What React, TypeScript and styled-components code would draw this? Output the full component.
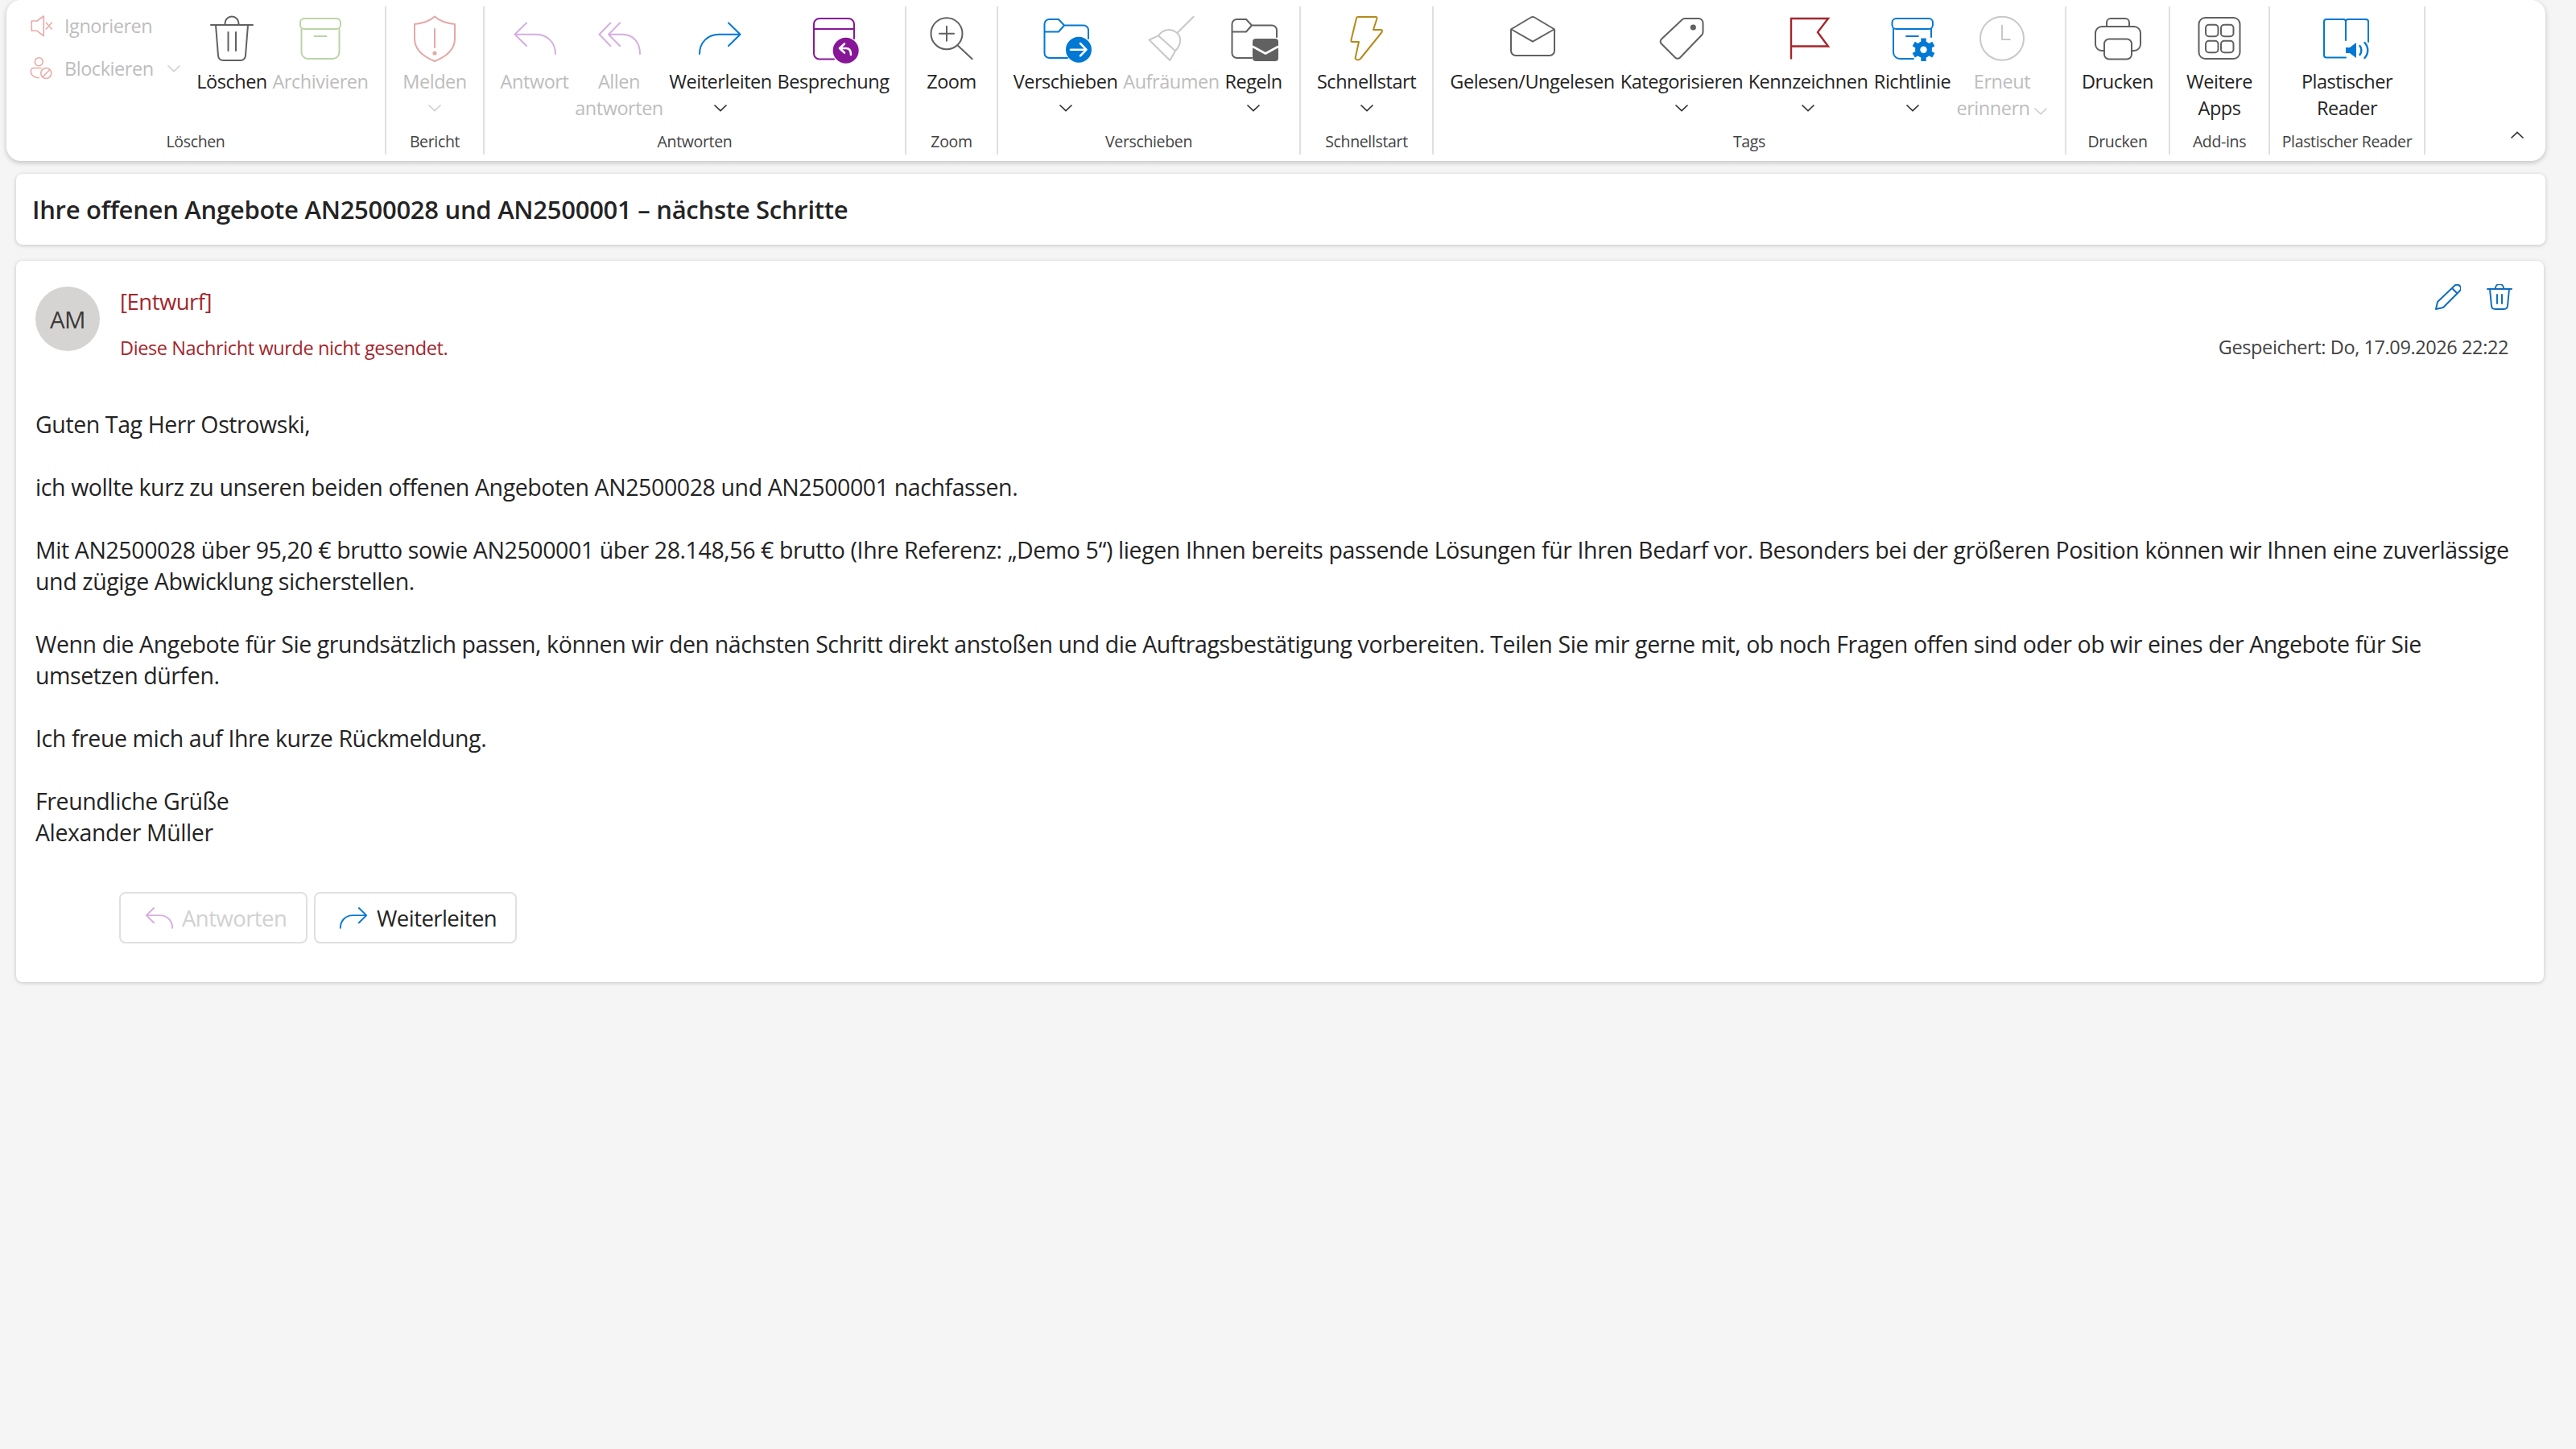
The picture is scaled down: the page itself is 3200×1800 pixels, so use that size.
import React from 'react';
import styled, { createGlobalStyle } from 'styled-components';

const GlobalStyle = createGlobalStyle`
    html, body {
        margin: 0;
        background: #f5f5f5;
    }
    body {
        font-family: "Open Sans", "Liberation Sans", sans-serif;
        color: #242424;
    }
`;

const Page = styled.div`
    min-height: 100vh;
    display: flex;
    flex-direction: column;
`;

const Ribbon = styled.div`
    display: flex;
    align-items: flex-start;
    height: 200px;
    box-sizing: border-box;
    margin: 0 38px 16px 8px;
    padding-top: 8px;
    background: #fff;
    border-radius: 18px;
    box-shadow: 0 2px 6px rgba(0, 0, 0, 0.22);
`;

const Group = styled.div<{ $w: number }>`
    width: ${p => p.$w}px;
    height: 184px;
    box-sizing: border-box;
    border-right: 2px solid #e0e0e0;
    display: flex;
    flex-direction: column;
    flex: none;
`;

const GroupItems = styled.div<{ $pad?: number }>`
    height: 150px;
    display: flex;
    align-items: flex-start;
    justify-content: ${p => (p.$pad === undefined ? 'center' : 'flex-start')};
    padding-left: ${p => p.$pad ?? 0}px;
`;

const GroupLabel = styled.div`
    height: 34px;
    line-height: 35px;
    text-align: center;
    font-size: 19.5px;
    letter-spacing: -0.35px;
    color: #424242;
    white-space: nowrap;
`;

const Tool = styled.div<{ $w: number; $off?: boolean }>`
    width: ${p => p.$w}px;
    flex: none;
    padding-top: 8px;
    display: flex;
    flex-direction: column;
    align-items: center;
    font-size: 23.5px;
    line-height: 33px;
    letter-spacing: -0.46px;
    color: ${p => (p.$off ? '#bdbdbd' : '#242424')};
    white-space: nowrap;
`;

const ToolText = styled.div`
    margin-top: 5px;
    text-align: center;
`;

const ChevronRow = styled.div`
    height: 32px;
    display: flex;
    align-items: center;
    justify-content: center;
`;

const ChevronInline = styled.span`
    display: inline-block;
    margin-left: 4px;
`;

const SmallStack = styled.div`
    width: 219px;
    flex: none;
    padding: 8px 0 0 14px;
    box-sizing: border-box;
    display: flex;
    flex-direction: column;
    gap: 21px;
`;

const SmallRow = styled.div`
    display: flex;
    align-items: center;
    gap: 12px;
    height: 32px;
    font-size: 23.5px;
    letter-spacing: -0.46px;
    color: #bdbdbd;
    white-space: nowrap;
`;

const Glyph = styled.svg<{ $sw?: number; $fg: string }>`
    flex: none;
    display: block;
    fill: none;
    color: ${p => p.$fg};
    stroke: currentColor;
    stroke-width: ${p => p.$sw ?? 2};
    stroke-linecap: round;
    stroke-linejoin: round;
`;

const ChevronSvg = styled.svg<{ $off?: boolean }>`
    flex: none;
    display: block;
    fill: none;
    stroke: ${p => (p.$off ? '#d0d0d0' : '#323130')};
    stroke-width: 1.7;
`;

const CollapseButton = styled.div`
    margin: auto 26px 27px auto;
    display: flex;
`;

const SubjectCard = styled.div`
    margin: 0 38px 20px 20px;
    height: 88px;
    padding-left: 20px;
    display: flex;
    align-items: center;
    background: #fff;
    border-radius: 8px;
    box-shadow: 0 1px 5px rgba(0, 0, 0, 0.2);
    font-size: 31px;
    font-weight: 600;
    letter-spacing: -0.28px;
    color: #242424;
`;

const MessageCard = styled.div`
    margin: 0 40px 0 20px;
    padding: 32px 44px 48px 24px;
    background: #fff;
    border-radius: 8px;
    box-shadow: 0 1px 5px rgba(0, 0, 0, 0.2);
`;

const MessageHead = styled.div`
    display: flex;
    align-items: flex-start;
    height: 152px;
`;

const Avatar = styled.div`
    width: 80px;
    height: 80px;
    flex: none;
    border-radius: 50%;
    background: #d6d4d2;
    color: #3b3a39;
    font-size: 29.5px;
    letter-spacing: -0.5px;
    display: flex;
    align-items: center;
    justify-content: center;
`;

const HeadInfo = styled.div`
    margin-left: 25px;
    flex: 1;
    color: #a4262c;
`;

const DraftName = styled.div`
    height: 38px;
    line-height: 38px;
    font-size: 27.5px;
    letter-spacing: -0.5px;
`;

const DraftNote = styled.div`
    margin-top: 19px;
    line-height: 38px;
    font-size: 23.5px;
    letter-spacing: -0.4px;
`;

const HeadMeta = styled.div`
    display: flex;
    flex-direction: column;
    align-items: flex-end;
`;

const HeadActions = styled.div`
    display: flex;
    gap: 32px;
    margin-right: -5px;
    margin-top: -3px;
`;

const SavedAt = styled.div`
    margin-top: 27px;
    line-height: 38px;
    font-size: 23.5px;
    letter-spacing: -0.4px;
    color: #424242;
    white-space: nowrap;
`;

const MailBody = styled.div`
    font-size: 28.5px;
    line-height: 39px;
    letter-spacing: -0.4px;
    color: #242424;
    white-space: nowrap;
`;

const MailPara = styled.p`
    margin: 0 0 39px;
`;

const ReplyBar = styled.div`
    display: flex;
    gap: 8px;
    margin: 54px 0 0 104px;
`;

const ReplyButton = styled.div<{ $w: number; $off?: boolean }>`
    width: ${p => p.$w}px;
    height: 64px;
    box-sizing: border-box;
    border: 2px solid #e0e0e0;
    border-radius: 8px;
    padding-left: 27px;
    display: flex;
    align-items: center;
    gap: 8px;
    font-size: 27.5px;
    letter-spacing: -0.55px;
    color: ${p => (p.$off ? '#d1d1d1' : '#242424')};
`;

const Chevron = ({ off }: { off?: boolean }) => (
    <ChevronSvg $off={off} width="18" height="10" viewBox="0 0 18 10">
        <polyline points="1.5,1.5 9,8.5 16.5,1.5" />
    </ChevronSvg>
);

const ChevronUp = () => (
    <ChevronSvg width="18" height="10" viewBox="0 0 18 10">
        <polyline points="1.5,8.5 9,1.5 16.5,8.5" />
    </ChevronSvg>
);

const ICONS: Record<string, React.ReactNode> = {
    trash: (
        <>
            <path d="M6 15H58M23.5 15V13a8.5 8.5 0 0 1 17 0v2" />
            <path d="M12 15L15 53q.5 6 6.5 6h21q6 0 6.5-6L52 15" />
            <path d="M27.5 24V47M37 24V47" />
        </>
    ),
    archive: (
        <>
            <rect x="7" y="7" width="50" height="13" rx="5" />
            <path d="M8.5 20V49a8 8 0 0 0 8 8h31a8 8 0 0 0 8-8V20M24.5 29H39.5" />
        </>
    ),
    shield: (
        <>
            <path d="M32 4.5C38 10 47 13 57 14V32C57 46 47 54 32 60C17 54 7 46 7 32V14C17 13 26 10 32 4.5Z" />
            <path d="M32 20V43" />
            <circle cx="32" cy="50" r="1.6" fill="currentColor" />
        </>
    ),
    reply: <path d="M22 12.5L7.5 26.7L22 41M7.5 26.7H34C48 26.7 58 37 58 51" />,
    replyAll: <path d="M21.3 12.5L7.5 26.7L21.3 41M33 12.5L19 26.7L33 41M19 26.7H36C50 26.7 58 37 58 51" />,
    forward: <path d="M42 12.5L56.5 26.7L42 41M56.5 26.7H30C16 26.7 6 37 6 51" />,
    meeting: (
        <>
            <path d="M33 57.5H15a7 7 0 0 1-7-7V14a7 7 0 0 1 7-7H51a7 7 0 0 1 7 7V32M8 20H58" />
            <circle cx="47.7" cy="46.7" r="15" fill="currentColor" />
            <path d="M46 38.5L40 44L46 49.5M40 44H48C52 44 54 47 54 52" stroke="#fff" strokeWidth="2.6" />
        </>
    ),
    zoom: (
        <>
            <circle cx="26" cy="25.7" r="19.5" />
            <path d="M40 40.7L57.7 57.3M26 16.7V34.7M17 25.7H35" />
        </>
    ),
    folderMove: (
        <>
            <path d="M5.5 23.5V14a6 6 0 0 1 6-6H23L30 15.5L23 23.5H5.5V50a6 6 0 0 0 6 6H34M30 15.5H54a6 6 0 0 1 6 6V32" />
            <circle cx="48" cy="45.7" r="15" fill="currentColor" />
            <path d="M38 45.7H57M50 38L57.5 45.7L50 53.4" stroke="#fff" strokeWidth="2.6" />
        </>
    ),
    broom: (
        <>
            <path d="M59.7 4.7L40.3 24" />
            <path d="M4.5 33.5L16 28.3C20 22 30 18 38 24C46 30 44 40 37 47.3L30.3 59Z" />
            <path d="M16 28.3L37 47.3" />
        </>
    ),
    folderRules: (
        <>
            <path d="M5.5 23.5V14a6 6 0 0 1 6-6H23L30 15.5L23 23.5H5.5V50a6 6 0 0 0 6 6H30M30 15.5H55a6 6 0 0 1 6 6V30" />
            <rect x="31" y="32" width="32" height="28" rx="4" fill="currentColor" stroke="none" />
            <path d="M31.5 42L47 50.5L62.5 42" stroke="#fff" strokeWidth="2.6" />
        </>
    ),
    bolt: <path d="M21 5H43Q45 5 44.5 7L40 21H49Q52 21 50.5 24L24 57Q20 60 17.5 56.5L22 36H14Q12 36 12.5 33.5L19 6.5Q19.5 5 21 5Z" />,
    mailOpen: (
        <path d="M5 23a3 3 0 0 1 1.5-3.5L30 5.5a4 4 0 0 1 4 0L57.5 19.5a3 3 0 0 1 1.5 3.5V47a6 6 0 0 1-6 6H11a6 6 0 0 1-6-6ZM5.5 20.5L32 35.7L58.5 20.5" />
    ),
    tag: (
        <>
            <path d="M36 7H53a5.5 5.5 0 0 1 5.5 5.5V24a5 5 0 0 1-1.5 3.5L30 55.5a4 4 0 0 1-6 0L7 38.5a4 4 0 0 1 0-6L32.5 8.5a5 5 0 0 1 3.5-1.5Z" />
            <circle cx="46.3" cy="18" r="3.6" fill="currentColor" stroke="none" />
        </>
    ),
    flag: <path d="M11 57.5V7H57L44 24L57 41.5H11" strokeLinecap="butt" strokeLinejoin="miter" strokeWidth="2.4" />,
    policy: (
        <>
            <rect x="6.5" y="7" width="50.5" height="13" rx="5" />
            <path d="M8 20V49a8 8 0 0 0 8 8H33M55 20V30M24 29H38.8" />
            <g stroke="currentColor" strokeWidth="6.4" strokeLinecap="butt">
                <path d="M45.5 31.5V60M33.2 38.6L57.8 52.8M33.2 52.8L57.8 38.6" />
            </g>
            <circle cx="45.5" cy="45.7" r="10.5" fill="currentColor" stroke="none" />
            <circle cx="45.5" cy="45.7" r="4.2" fill="#fff" stroke="none" />
        </>
    ),
    clock: (
        <>
            <circle cx="32" cy="31.7" r="27" />
            <path d="M32 15.7V33H41.7" />
        </>
    ),
    printer: (
        <>
            <path d="M18 17V12a5 5 0 0 1 5-5H41a5 5 0 0 1 5 5V17" />
            <path d="M15 47H12a8 8 0 0 1-8-8V25a8 8 0 0 1 8-8H52a8 8 0 0 1 8 8V39a8 8 0 0 1-8 8H49" />
            <rect x="15" y="32.5" width="34" height="25" rx="6" />
        </>
    ),
    apps: (
        <>
            <rect x="6.5" y="6" width="51" height="51" rx="8" />
            <rect x="15" y="14.7" width="15.5" height="14.5" rx="4" />
            <rect x="34" y="14.7" width="15.5" height="14.5" rx="4" />
            <rect x="15" y="34.7" width="15.5" height="14.5" rx="4" />
            <rect x="34" y="34.7" width="15.5" height="14.5" rx="4" />
        </>
    ),
    reader: (
        <>
            <path d="M30 55.5H6a3 3 0 0 1-3-3V11a3 3 0 0 1 3-3H27a3 3 0 0 1 3 3V34M30 11a3 3 0 0 1 3-3H55a3 3 0 0 1 3 3V36" />
            <path d="M30 43H35L43 37V56L35 50H30Z" fill="currentColor" stroke="none" />
            <path d="M47.5 41C50 44 50 49 47.5 52M53.5 37C58.5 42.5 58.5 50.5 53.5 56" strokeWidth="2.4" />
        </>
    ),
};

const Icon = ({ name, color, size = 64, sw }: { name: string; color: string; size?: number; sw?: number }) => (
    <Glyph $fg={color} $sw={sw} width={size} height={size} viewBox="0 0 64 64">
        {ICONS[name]}
    </Glyph>
);

const BLUE = '#0078d4';
const GREY = '#616161';

interface ToolProps {
    w: number;
    icon: string;
    color: string;
    lines: string[];
    off?: boolean;
    chevron?: boolean;
    inlineChevron?: boolean;
}

const ToolButton = ({ w, icon, color, lines, off, chevron, inlineChevron }: ToolProps) => (
    <Tool $w={w} $off={off}>
        <Icon name={icon} color={color} />
        <ToolText>
            {lines.map((line, i) => (
                <div key={line}>
                    {line}
                    {inlineChevron && i === lines.length - 1 && (
                        <ChevronInline>
                            <Chevron off />
                        </ChevronInline>
                    )}
                </div>
            ))}
        </ToolText>
        {chevron && (
            <ChevronRow>
                <Chevron off={off} />
            </ChevronRow>
        )}
    </Tool>
);

const BODY: string[][] = [
    ['Guten Tag Herr Ostrowski,'],
    ['ich wollte kurz zu unseren beiden offenen Angeboten AN2500028 und AN2500001 nachfassen.'],
    [
        'Mit AN2500028 über 95,20 € brutto sowie AN2500001 über 28.148,56 € brutto (Ihre Referenz: „Demo 5“) liegen Ihnen bereits passende Lösungen für Ihren Bedarf vor. Besonders bei der größeren Position können wir Ihnen eine zuverlässige',
        'und zügige Abwicklung sicherstellen.',
    ],
    [
        'Wenn die Angebote für Sie grundsätzlich passen, können wir den nächsten Schritt direkt anstoßen und die Auftragsbestätigung vorbereiten. Teilen Sie mir gerne mit, ob noch Fragen offen sind oder ob wir eines der Angebote für Sie',
        'umsetzen dürfen.',
    ],
    ['Ich freue mich auf Ihre kurze Rückmeldung.'],
    ['Freundliche Grüße', 'Alexander Müller'],
];

export default function App() {
    return (
        <Page>
            <GlobalStyle />
            <Ribbon>
                <Group $w={472}>
                    <GroupItems $pad={14}>
                        <SmallStack>
                            <SmallRow>
                                <Glyph $fg="#e8aaa8" $sw={1.6} width="32" height="32" viewBox="0 0 32 32">
                                    <path d="M3.3 10V22.3H10L18.3 28.7V4L10 10ZM21.3 12.3L28.3 20M28.3 12.3L21.3 20" />
                                </Glyph>
                                Ignorieren
                            </SmallRow>
                            <SmallRow>
                                <Glyph $fg="#e8aaa8" $sw={1.6} width="32" height="32" viewBox="0 0 32 32">
                                    <circle cx="12.3" cy="7.7" r="5" />
                                    <path d="M15 15.5H6a3.7 3.7 0 0 0-3.7 3.7v1c0 4 4 7.5 10 7.5" />
                                    <circle cx="21.3" cy="22" r="6.5" />
                                    <path d="M17 26.5L25.8 17.5" />
                                </Glyph>
                                Blockieren
                                <ChevronInline>
                                    <Chevron off />
                                </ChevronInline>
                            </SmallRow>
                        </SmallStack>
                        <ToolButton w={94} icon="trash" color={GREY} lines={['Löschen']} />
                        <ToolButton w={126} icon="archive" color="#bcd4a5" lines={['Archivieren']} off />
                    </GroupItems>
                    <GroupLabel>Löschen</GroupLabel>
                </Group>
                <Group $w={122}>
                    <GroupItems>
                        <ToolButton w={100} icon="shield" color="#e3a9a7" lines={['Melden']} off chevron />
                    </GroupItems>
                    <GroupLabel>Bericht</GroupLabel>
                </Group>
                <Group $w={524}>
                    <GroupItems $pad={15}>
                        <ToolButton w={94} icon="reply" color="#d6aee0" lines={['Antwort']} off />
                        <ToolButton w={116} icon="replyAll" color="#d6aee0" lines={['Allen', 'antworten']} off />
                        <ToolButton w={136} icon="forward" color={BLUE} lines={['Weiterleiten']} chevron />
                        <ToolButton w={144} icon="meeting" color="#881798" lines={['Besprechung']} />
                    </GroupItems>
                    <GroupLabel>Antworten</GroupLabel>
                </Group>
                <Group $w={114}>
                    <GroupItems>
                        <ToolButton w={90} icon="zoom" color={GREY} lines={['Zoom']} />
                    </GroupItems>
                    <GroupLabel>Zoom</GroupLabel>
                </Group>
                <Group $w={376}>
                    <GroupItems $pad={16}>
                        <ToolButton w={135} icon="folderMove" color={BLUE} lines={['Verschieben']} chevron />
                        <ToolButton w={128} icon="broom" color="#c8c8c8" lines={['Aufräumen']} off />
                        <ToolButton w={76} icon="folderRules" color={GREY} lines={['Regeln']} chevron />
                    </GroupItems>
                    <GroupLabel>Verschieben</GroupLabel>
                </Group>
                <Group $w={165}>
                    <GroupItems>
                        <ToolButton w={130} icon="bolt" color="#b58a1b" lines={['Schnellstart']} chevron />
                    </GroupItems>
                    <GroupLabel>Schnellstart</GroupLabel>
                </Group>
                <Group $w={786}>
                    <GroupItems $pad={17}>
                        <ToolButton w={211} icon="mailOpen" color={GREY} lines={['Gelesen/Ungelesen']} />
                        <ToolButton w={160} icon="tag" color={GREY} lines={['Kategorisieren']} chevron />
                        <ToolButton w={154} icon="flag" color="#a4262c" lines={['Kennzeichnen']} chevron />
                        <ToolButton w={105} icon="policy" color={BLUE} lines={['Richtlinie']} chevron />
                        <ToolButton w={118} icon="clock" color="#c8c8c8" lines={['Erneut', 'erinnern']} off inlineChevron />
                    </GroupItems>
                    <GroupLabel>Tags</GroupLabel>
                </Group>
                <Group $w={129}>
                    <GroupItems>
                        <ToolButton w={100} icon="printer" color={GREY} lines={['Drucken']} />
                    </GroupItems>
                    <GroupLabel>Drucken</GroupLabel>
                </Group>
                <Group $w={124}>
                    <GroupItems>
                        <ToolButton w={100} icon="apps" color={GREY} lines={['Weitere', 'Apps']} />
                    </GroupItems>
                    <GroupLabel>Add-ins</GroupLabel>
                </Group>
                <Group $w={193}>
                    <GroupItems>
                        <ToolButton w={130} icon="reader" color={BLUE} lines={['Plastischer', 'Reader']} />
                    </GroupItems>
                    <GroupLabel>Plastischer Reader</GroupLabel>
                </Group>
                <CollapseButton>
                    <ChevronUp />
                </CollapseButton>
            </Ribbon>

            <SubjectCard>Ihre offenen Angebote AN2500028 und AN2500001 – nächste Schritte</SubjectCard>

            <MessageCard>
                <MessageHead>
                    <Avatar>AM</Avatar>
                    <HeadInfo>
                        <DraftName>[Entwurf]</DraftName>
                        <DraftNote>Diese Nachricht wurde nicht gesendet.</DraftNote>
                    </HeadInfo>
                    <HeadMeta>
                        <HeadActions>
                            <Glyph $fg="#106ebe" width="32" height="32" viewBox="0 0 32 32">
                                <path d="M1 31L3 22L24 2a4.5 4.5 0 0 1 6.5 6.5L10 29ZM21 5L27.5 11.5" />
                            </Glyph>
                            <Glyph $fg="#106ebe" width="32" height="32" viewBox="0 0 32 32">
                                <path d="M1 6H31M11 6V5a5 5 0 0 1 10 0v1M4 6L6 27q.4 4 4.5 4h11q4 0 4.5-4L28 6M13 13V24M19 13V24" />
                            </Glyph>
                        </HeadActions>
                        <SavedAt>Gespeichert: Do, 17.09.2026 22:22</SavedAt>
                    </HeadMeta>
                </MessageHead>
                <MailBody>
                    {BODY.map(para => (
                        <MailPara key={para[0]}>
                            {para.map((line, i) => (
                                <React.Fragment key={line}>
                                    {i > 0 && <br />}
                                    {line}
                                </React.Fragment>
                            ))}
                        </MailPara>
                    ))}
                </MailBody>
                <ReplyBar>
                    <ReplyButton $w={234} $off>
                        <Icon name="reply" color="#d6aee0" size={41} sw={3} />
                        Antworten
                    </ReplyButton>
                    <ReplyButton $w={252}>
                        <Icon name="forward" color={BLUE} size={41} sw={3} />
                        Weiterleiten
                    </ReplyButton>
                </ReplyBar>
            </MessageCard>
        </Page>
    );
}
